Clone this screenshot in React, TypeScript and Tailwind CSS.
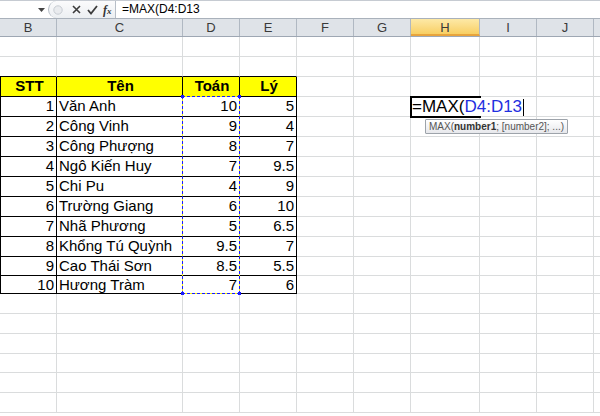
import React from 'react';

const COLS = ['B', 'C', 'D', 'E', 'F', 'G', 'H', 'I', 'J', ''];
const WIDTHS = [57, 126, 57, 57, 57, 57, 69, 57, 57, 57];

type Row = [string, string, string, string];

const DATA: Row[] = [
  ['1', 'Văn Anh', '10', '5'],
  ['2', 'Công Vinh', '9', '4'],
  ['3', 'Công Phượng', '8', '7'],
  ['4', 'Ngô Kiến Huy', '7', '9.5'],
  ['5', 'Chi Pu', '4', '9'],
  ['6', 'Trường Giang', '6', '10'],
  ['7', 'Nhã Phương', '5', '6.5'],
  ['8', 'Khổng Tú Quỳnh', '9.5', '7'],
  ['9', 'Cao Thái Sơn', '8.5', '5.5'],
  ['10', 'Hương Tràm', '7', '6'],
];

// rows 12 and 13 are a touch shorter in the screenshot
const ROW_H = [20, 20, 20, 20, 20, 20, 20, 20, 19, 18];
const BELOW_H = [20, 20, 20, 19, 20, 20];

const font = { fontFamily: '"Liberation Sans", Arial, sans-serif' };

const Cell: React.FC<{ w: number; h?: number; table?: boolean; head?: boolean; right?: boolean; children?: React.ReactNode }> = ({ w, h = 20, table, head, right, children }) => (
  <div
    className={`shrink-0 border-r border-b box-border overflow-visible whitespace-nowrap text-[15px] leading-[18px] text-black ${
      table ? 'border-black' : 'border-[#dadcdd]'
    } ${head ? 'bg-[#ffff00] font-bold text-center' : ''} ${right ? 'text-right pr-[2px]' : 'pl-[2px]'}`}
    style={{ width: w, height: h }}
  >
    {children}
  </div>
);

const FormulaBar = () => (
  <div className="flex h-[19px] border-t border-t-[#c6cbd2] border-b border-b-[#a9b1bb] bg-white">
    <div className="w-[48px] relative">
      <svg className="absolute left-[38px] top-[7px]" width="7" height="4" viewBox="0 0 7 4">
        <path d="M0 0h7L3.5 4z" fill="#444" />
      </svg>
    </div>
    <div className="w-[67px] flex items-center rounded-l-[9px] border-l border-[#b7bec7] bg-gradient-to-b from-[#fbfbfc] to-[#eceff2]">
      <svg className="ml-[4px]" width="10" height="10" viewBox="0 0 10 10">
        <circle cx="5" cy="5" r="4.2" fill="#e9ebee" stroke="#c7ccd2" strokeWidth="1" />
      </svg>
      <svg className="ml-[9px]" width="9" height="9" viewBox="0 0 9 9">
        <path d="M1 1l7 7M8 1L1 8" stroke="#3c3c3c" strokeWidth="1.6" />
      </svg>
      <svg className="ml-[6px]" width="11" height="10" viewBox="0 0 11 10">
        <path d="M1 5l3 3.5L10 1" stroke="#3c3c3c" strokeWidth="1.8" fill="none" />
      </svg>
      <span className="ml-[5px] text-[12px] italic font-bold text-[#333] leading-none" style={{ fontFamily: '"Liberation Serif", serif' }}>
        f<span className="text-[9px]">x</span>
      </span>
    </div>
    <div className="flex-1 border-l border-[#b7bec7] pl-[6px] text-[12px] leading-[17px] text-black" style={font}>
      =MAX(D4:D13
    </div>
  </div>
);

const Header = () => (
  <div className="flex h-[18px] bg-[#dfe3e8] border-b border-[#9ea7b3]">
    {COLS.map((c, i) => (
      <div
        key={i}
        className={`shrink-0 h-full border-r border-[#b0b8c2] text-center text-[13px] leading-[17px] text-[#3a3a3a] ${
          c === 'H' ? 'bg-gradient-to-b from-[#fde9a6] to-[#f8cf62] border-b-2 border-b-[#e8a43c]' : ''
        }`}
        style={{ width: WIDTHS[i], ...font }}
      >
        {c}
      </div>
    ))}
  </div>
);

const EmptyRow: React.FC<{ h?: number; tableBelow?: boolean }> = ({ h = 20, tableBelow }) => (
  <div className="flex">
    {WIDTHS.map((w, i) => (
      <div
        key={i}
        className={`shrink-0 border-r border-b box-border border-r-[#dadcdd] ${
          tableBelow && i < 4 ? 'border-b-black' : 'border-b-[#dadcdd]'
        }`}
        style={{ width: w, height: h }}
      />
    ))}
  </div>
);

export default function App() {
  return (
    <div className="w-[600px] h-[416px] overflow-hidden bg-white relative" style={font}>
      <FormulaBar />
      <Header />
      <EmptyRow />
      <EmptyRow tableBelow />
      {/* table header */}
      <div className="flex">
        <div className="border-l border-black w-0" />
        <Cell w={56} table head>STT</Cell>
        <Cell w={126} table head>Tên</Cell>
        <Cell w={57} table head>Toán</Cell>
        <Cell w={57} table head>Lý</Cell>
        {WIDTHS.slice(4).map((w, i) => (
          <Cell key={i} w={w} />
        ))}
      </div>
      {DATA.map((r, ri) => (
        <div className="flex" key={ri}>
          <div className="border-l border-black w-0" />
          <Cell w={56} h={ROW_H[ri]} table right>{r[0]}</Cell>
          <Cell w={126} h={ROW_H[ri]} table>{r[1]}</Cell>
          <Cell w={57} h={ROW_H[ri]} table right>{r[2]}</Cell>
          <Cell w={57} h={ROW_H[ri]} table right>{r[3]}</Cell>
          {WIDTHS.slice(4).map((w, i) => (
            <Cell key={i} w={w} h={ROW_H[ri]} />
          ))}
        </div>
      ))}
      {BELOW_H.map((h, i) => (
        <EmptyRow key={i} h={h} />
      ))}

      {/* marching ants around D4:D13 */}
      <div className="absolute left-[182px] top-[96px] w-[58px] h-[198px] border border-[#f2f200]" />
      <div className="absolute left-[182px] top-[96px] w-[58px] h-[198px] border border-dashed border-[#1a1aff]" />
      <div className="absolute left-[181px] top-[95px] w-[3px] h-[3px] bg-[#1a1aff]" />
      <div className="absolute left-[238px] top-[95px] w-[3px] h-[3px] bg-[#1a1aff]" />
      <div className="absolute left-[181px] top-[292px] w-[3px] h-[3px] bg-[#1a1aff]" />
      <div className="absolute left-[238px] top-[292px] w-[3px] h-[3px] bg-[#1a1aff]" />

      {/* active cell H4 in edit mode */}
      <div className="absolute left-[410px] top-[96px] w-[71px] h-[22px] border-2 border-black" />
      <div className="absolute left-[412px] top-[98px] h-[18px] flex items-center bg-white pr-[1px] text-[17px] leading-[18px] whitespace-nowrap">
        <span className="text-black">=MAX(</span>
        <span className="text-[#1f2fe0]">D4:D13</span>
        <span className="ml-[1px] w-px h-[17px] bg-black" />
      </div>
      <div className="absolute left-[425px] top-[119px] h-[15px] px-[3px] border border-[#9da3aa] bg-gradient-to-b from-white to-[#e7e8ec] text-[10px] leading-[13px] text-[#555] whitespace-nowrap rounded-[1px]">
        MAX(<b className="text-[#333]">number1</b>; [number2]; ...)
      </div>
    </div>
  );
}
